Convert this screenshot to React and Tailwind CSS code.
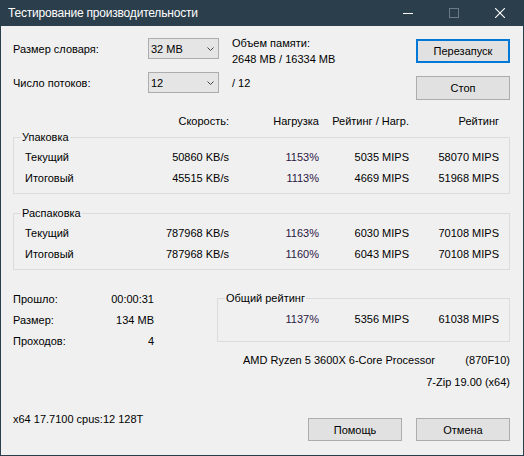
import React from "react";

const COLS = "grid grid-cols-[100px_104px_90px_90px_90px] items-center";

function Combo({ value }) {
  return (
    <div className="w-[71px] h-[21px] border border-[#adadad] bg-[#e5e5e5] flex items-center justify-between pl-[2px] pr-[4px]">
      <span className="leading-[16px]">{value}</span>
      <svg width="7" height="4" viewBox="0 0 7 4" className="block">
        <path d="M0.5 0.5 L3.5 3.5 L6.5 0.5" fill="none" stroke="#444" strokeWidth="1" />
      </svg>
    </div>
  );
}

function Btn({ children, focused, h = "h-[24px]" }) {
  return (
    <div
      className={
        "w-[94px] flex items-center justify-center bg-[#e1e1e1] leading-[16px] " +
        h +
        " " +
        (focused ? "border-2 border-[#0078d7]" : "border border-[#adadad]")
      }
    >
      {children}
    </div>
  );
}

function DataRow({ label, speed, load, mips, rating }) {
  return (
    <div className={COLS + " h-[21px] leading-[16px]"}>
      <span>{label}</span>
      <span className="text-right">{speed}</span>
      <span className="text-right text-[#2c1745]">{load}</span>
      <span className="text-right">{mips}</span>
      <span className="text-right">{rating}</span>
    </div>
  );
}

function Group({ title, children, className = "" }) {
  return (
    <fieldset className={"border border-[#dcdcdc] " + className}>
      <legend className="ml-[7px] px-[1px] leading-[16px]">{title}</legend>
      {children}
    </fieldset>
  );
}

export default function App() {
  return (
    <div className="w-[524px] h-[456px] bg-[#f0f0f0] border border-t-0 border-[#2b3e4b] flex flex-col text-[11px] text-black font-['Liberation_Sans',Arial,sans-serif] overflow-hidden">
      {/* Title bar */}
      <div className="h-[26px] shrink-0 bg-[#2b3e4b] flex items-center justify-between">
        <span className="pl-[7px] text-white text-[12px] leading-[16px] tracking-[-0.2px]">
          Тестирование производительности
        </span>
        <div className="flex h-full">
          <div className="w-[46px] h-full flex items-center justify-center">
            <svg width="10" height="10" viewBox="0 0 10 10" className="block">
              <path d="M0 5.5 H10" stroke="#ffffff" strokeWidth="1" />
            </svg>
          </div>
          <div className="w-[46px] h-full flex items-center justify-center">
            <svg width="10" height="10" viewBox="0 0 10 10" className="block">
              <rect x="0.5" y="0.5" width="9" height="9" fill="none" stroke="#6b7a84" strokeWidth="1" />
            </svg>
          </div>
          <div className="w-[46px] h-full flex items-center justify-center">
            <svg width="10" height="10" viewBox="0 0 10 10" className="block">
              <path d="M0 0 L10 10 M10 0 L0 10" stroke="#ffffff" strokeWidth="1.1" />
            </svg>
          </div>
        </div>
      </div>

      {/* Body */}
      <div className="flex flex-col pl-[12px] pr-[13px]">
        {/* Top section */}
        <div className="flex justify-between pt-[12px]">
          <div className="flex flex-col gap-[13px]">
            <div className="flex items-center h-[21px]">
              <span className="w-[135px] leading-[16px]">Размер словаря:</span>
              <Combo value="32 MB" />
              <div className="ml-[13px] self-start -mt-[3px] leading-[16px]">
                <div>Объем памяти:</div>
                <div>2648 MB / 16334 MB</div>
              </div>
            </div>
            <div className="flex items-center h-[21px]">
              <span className="w-[135px] leading-[16px]">Число потоков:</span>
              <Combo value="12" />
              <span className="ml-[13px] leading-[16px]">/ 12</span>
            </div>
          </div>
          <div className="flex flex-col gap-[13px] pt-[1px]">
            <Btn focused>Перезапуск</Btn>
            <Btn>Стоп</Btn>
          </div>
        </div>

        {/* Header */}
        <div className={COLS + " mt-[13px] pl-[12px] h-[16px] leading-[16px]"}>
          <span></span>
          <span className="text-right">Скорость:</span>
          <span className="text-right">Нагрузка</span>
          <span className="text-right">Рейтинг / Нагр.</span>
          <span className="text-right">Рейтинг</span>
        </div>

        {/* Packing */}
        <Group title="Упаковка">
          <div className="pl-[11px] mt-[1px] pb-[5px]">
            <DataRow label="Текущий" speed="50860 KB/s" load="1153%" mips="5035 MIPS" rating="58070 MIPS" />
            <DataRow label="Итоговый" speed="45515 KB/s" load="1113%" mips="4669 MIPS" rating="51968 MIPS" />
          </div>
        </Group>

        {/* Unpacking */}
        <Group title="Распаковка" className="mt-[11px]">
          <div className="pl-[11px] mt-[1px] pb-[5px]">
            <DataRow label="Текущий" speed="787968 KB/s" load="1163%" mips="6030 MIPS" rating="70108 MIPS" />
            <DataRow label="Итоговый" speed="787968 KB/s" load="1160%" mips="6043 MIPS" rating="70108 MIPS" />
          </div>
        </Group>

        {/* Bottom stats */}
        <div className="flex mt-[18px]">
          <div className="w-[141px] flex flex-col leading-[16px]">
            <div className="h-[21px] flex items-center justify-between">
              <span>Прошло:</span>
              <span>00:00:31</span>
            </div>
            <div className="h-[21px] flex items-center justify-between">
              <span>Размер:</span>
              <span>134 MB</span>
            </div>
            <div className="h-[21px] flex items-center justify-between">
              <span>Проходов:</span>
              <span>4</span>
            </div>
          </div>
          <div className="flex-1 ml-[63px] mt-[2px]">
            <Group title="Общий рейтинг">
              <div className="pl-[11px] mt-[2px] pb-[12px]">
                <div className="grid grid-cols-[90px_90px_90px] items-center h-[21px] leading-[16px]">
                  <span className="text-right text-[#2c1745]">1137%</span>
                  <span className="text-right">5356 MIPS</span>
                  <span className="text-right">61038 MIPS</span>
                </div>
              </div>
            </Group>
          </div>
        </div>

        {/* CPU line */}
        <div className="flex justify-between pl-[230px] mt-[1px] leading-[16px]">
          <span>AMD Ryzen 5 3600X 6-Core Processor</span>
          <span>(870F10)</span>
        </div>
        <div className="text-right mt-[6px] leading-[16px]">7-Zip 19.00 (x64)</div>

        {/* Footer */}
        <div className="flex items-start justify-between mt-[21px]">
          <span className="leading-[16px]">x64 17.7100 cpus:12 128T</span>
          <div className="flex gap-[14px] mt-[7px]">
            <Btn h="h-[23px]">Помощь</Btn>
            <Btn h="h-[23px]">Отмена</Btn>
          </div>
        </div>
      </div>
    </div>
  );
}
